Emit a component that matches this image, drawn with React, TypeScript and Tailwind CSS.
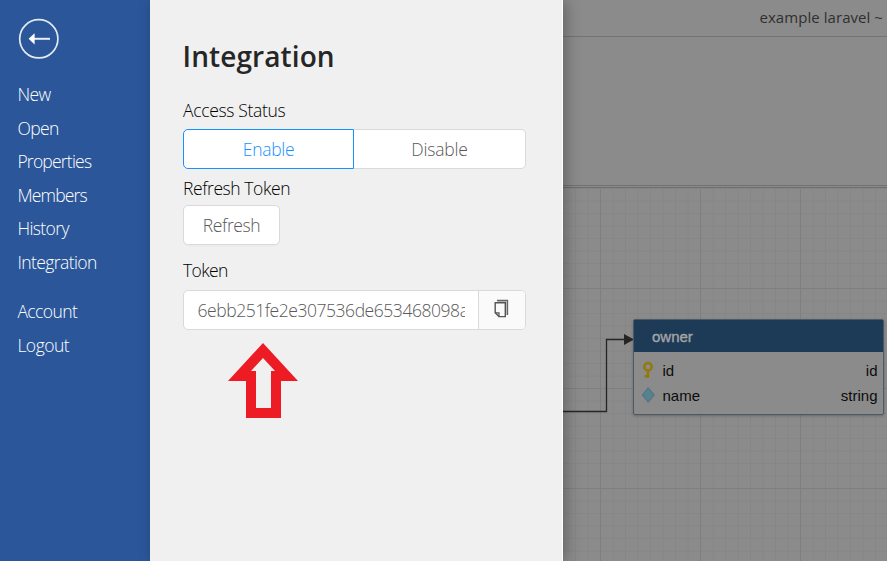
const ui = "font-['Open_Sans','Noto_Sans',sans-serif]";

type Entry = { label: string; tracking: string };

const fileItems: Entry[] = [
  { label: "New", tracking: "tracking-[-0.5px]" },
  { label: "Open", tracking: "tracking-[-0.6px]" },
  { label: "Properties", tracking: "tracking-[-0.78px]" },
  { label: "Members", tracking: "tracking-[-0.8px]" },
  { label: "History", tracking: "tracking-[-0.6px]" },
  { label: "Integration", tracking: "tracking-[-0.58px]" },
];

const accountItems: Entry[] = [
  { label: "Account", tracking: "tracking-[-0.58px]" },
  { label: "Logout", tracking: "tracking-[-0.5px]" },
];

function MenuGroup({ items }: { items: Entry[] }) {
  return (
    <ul>
      {items.map((item) => (
        <li key={item.label} className="h-[33.6px] leading-[33.6px]">
          <span className={item.tracking}>{item.label}</span>
        </li>
      ))}
    </ul>
  );
}

function Sidebar() {
  return (
    <nav className="h-full w-[150px] shrink-0 bg-[#2b579a] pl-[17.4px] pt-[18px] text-[17.5px] font-light text-white">
      <svg width="42" height="42" viewBox="0 0 42 42" fill="none" className="ml-[1px]">
        <circle cx="20.8" cy="20.8" r="19.1" stroke="#e3e9f2" strokeWidth="1.7" />
        <path d="M15.6 20.8H32" stroke="#e9eef5" strokeWidth="2" />
        <path d="M10.6 20.8L16.6 15.2V26.4Z" fill="#fff" />
      </svg>
      <div className="mt-[18px]">
        <MenuGroup items={fileItems} />
      </div>
      <div className="mt-[15.5px]">
        <MenuGroup items={accountItems} />
      </div>
    </nav>
  );
}

function CopyIcon() {
  return (
    <svg width="15" height="19" viewBox="0 0 15 19" fill="none" className="-ml-[1px] -mt-[3px]">
      <path d="M3 1.5H13.5V16" stroke="#666" strokeWidth="1.3" />
      <path d="M3.5 2.5H12.5V16" stroke="#aaa" strokeWidth="0.8" />
      <path d="M1.2 3.7H11.3V17.6H5L1.2 13.8Z" stroke="#555" strokeWidth="1.4" fill="#fafafa" />
      <path d="M1.2 13.8H5V17.6" stroke="#555" strokeWidth="1.2" />
    </svg>
  );
}

function IntegrationPanel() {
  return (
    <main className="relative z-10 h-full w-[413px] shrink-0 border-r border-white bg-[#f0f0f0] pl-[33px] pr-[36px] text-[17.5px] font-light text-black shadow-[3px_0_14px_rgba(0,0,0,0.28)]">
      <h1 className="-ml-[0.5px] pt-[37px] text-[28px] font-semibold leading-[38px] tracking-[0.1px] text-[#262626]">Integration</h1>
      <div className="mt-[22px] h-[32px] leading-[26px] tracking-[-0.33px]">Access Status</div>
      <div className="flex h-[40px] text-[#595959]">
        <button className="w-[171px] rounded-l-[5px] border border-[#1890ff] bg-white font-light tracking-[-0.3px] text-[#1890ff]">Enable</button>
        <button className="w-[172px] rounded-r-[5px] border border-l-0 border-[#d9d9d9] bg-white font-light tracking-[-0.2px]">Disable</button>
      </div>
      <div className="h-[36px] pt-[6px] leading-[26px] tracking-[-0.42px]">Refresh Token</div>
      <button className="block h-[40px] w-[97px] rounded-[5px] border border-[#d9d9d9] bg-white font-light tracking-[-0.4px] text-[#595959] shadow-[0_2px_0_rgba(0,0,0,0.015)]">Refresh</button>
      <div className="h-[45px] pt-[12px] leading-[26px] tracking-[-0.6px]">Token</div>
      <div className="flex h-[40px] rounded-[5px] border border-[#d9d9d9] bg-white text-[#595959]">
        <div className="ml-[13.5px] w-[267px] overflow-hidden whitespace-nowrap leading-[39px] tracking-[-0.45px]">6ebb251fe2e307536de653468098a</div>
        <div className="ml-auto flex w-[47px] items-center justify-center rounded-r-[4px] border-l border-[#d9d9d9] bg-[#fafafa]">
          <CopyIcon />
        </div>
      </div>
      <svg width="70" height="76" viewBox="0 0 70 76" className="ml-[45px] mt-[13px]">
        <path fillRule="evenodd" fill="#ed1c24" d="M35 0L70 38H53V75H18V38H0ZM35 15L23 28H28V65H43V28H47Z" />
      </svg>
    </main>
  );
}

const minorColumns = Array.from({ length: 27 }, (_, i) => i);
const minorRows = Array.from({ length: 31 }, (_, i) => i);

function Canvas() {
  return (
    <section className="relative flex-1 overflow-hidden bg-[#8b8b8b]">
      <svg width="324" height="375" viewBox="0 0 324 375" className="absolute left-0 top-[186px]">
        <g stroke="#868686">
          {minorColumns.map((i) => (
            <path key={i} d={`M${i * 12.5} 3V375`} />
          ))}
          {minorRows.map((i) => (
            <path key={i} d={`M0 ${i * 12.5 + 2.5}H324`} />
          ))}
        </g>
        <path d="M37.5 3V375M137.5 3V375M237.5 3V375M0 102.5H324M0 202.5H324M0 302.5H324" stroke="#7f7f7f" />
        <path d="M0 225.5H43.5V153.5H62" stroke="#252525" strokeWidth="1.3" fill="none" />
        <path d="M61 148L71 153.5L61 159Z" fill="#252525" />
      </svg>
      <header className="relative flex h-[37px] items-center justify-end border-b border-[#737373] bg-[#8b8b8b] pb-[1px] pr-[4px] text-[15px] tracking-[0.06px] text-[#303030]">
        example laravel ~
      </header>
      <div className="relative h-[151px] border-b border-[#6d6d6d] bg-[#8b8b8b]">
        <div className="h-[149px] border-b border-[#717171]" />
      </div>
      <article className="absolute left-[70px] top-[319px] h-[96px] w-[251px] rounded-[2px] border border-[#4c5967] bg-[#8b8b8b] font-['Liberation_Sans',Arial,sans-serif] text-[15px] text-[#0c0c0c] shadow-[0_1px_3px_rgba(0,0,0,0.25)]">
        <h2 className="h-[32px] bg-[#1d3b57] pl-[18px] text-[15px] leading-[34px] text-[#a5a5a5] [-webkit-text-stroke:0.35px_#a5a5a5]">owner</h2>
        <div className="flex h-[25px] items-center pl-[8px] pr-[5.5px] pt-[13px]">
          <svg width="12" height="18" viewBox="0 0 12 18" className="-mt-[2px] mr-[8.5px]" fill="none">
            <circle cx="6" cy="5.8" r="3.7" stroke="#937a08" strokeWidth="2.5" />
            <path d="M6 9V17M6 15.2H2.5" stroke="#937a08" strokeWidth="2.5" />
          </svg>
          <span>id</span>
          <span className="ml-auto">id</span>
        </div>
        <div className="flex h-[25px] items-center pl-[8px] pr-[5.5px] pt-[13px]">
          <svg width="13" height="16" viewBox="0 0 13 16" className="-mt-[2px] mr-[7.5px]">
            <path d="M6.3 0.7L12.3 8L6.3 15.3L0.3 8Z" fill="#58818e" stroke="#4a7080" />
          </svg>
          <span>name</span>
          <span className="ml-auto">string</span>
        </div>
      </article>
    </section>
  );
}

export default function App() {
  return (
    <div className={`flex h-[561px] w-[887px] overflow-hidden ${ui}`}>
      <Sidebar />
      <IntegrationPanel />
      <Canvas />
    </div>
  );
}
